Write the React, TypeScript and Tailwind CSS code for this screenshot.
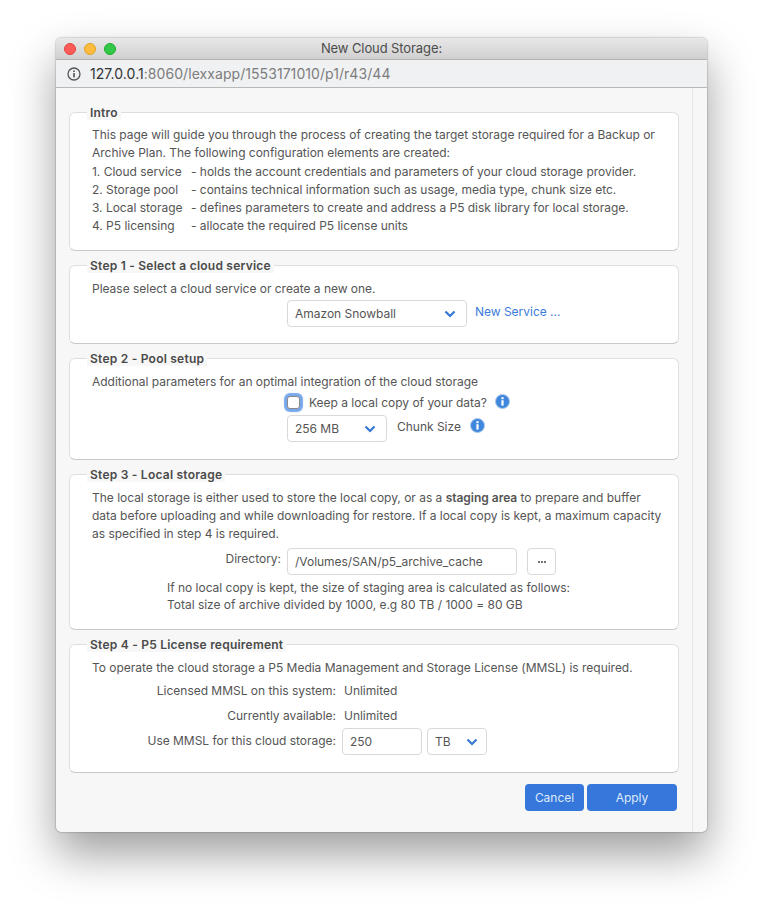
import React from 'react';

const FONT = "font-['Inter','Noto_Sans',sans-serif]";

const Chevron = () => (
  <svg width="12" height="8" viewBox="0 0 12 8" fill="none">
    <path d="M1.5 1.5 6 6l4.5-4.5" stroke="#3478d8" strokeWidth="2.2" />
  </svg>
);

const InfoIcon = () => (
  <svg width="15" height="15" viewBox="0 0 15 15" className="shrink-0">
    <circle cx="7.5" cy="7.5" r="7" fill="#3f87dc" stroke="#a9c8ea" strokeWidth="1" />
    <rect x="6.4" y="6.2" width="2.2" height="5.4" fill="#fff" />
    <rect x="6.4" y="3.2" width="2.2" height="2" fill="#fff" />
  </svg>
);

const Select = ({ label, className }: { label: string; className: string }) => (
  <div
    className={`h-[27px] flex items-center justify-between pl-[7px] bg-white border border-[#d9d9d9] rounded-[4px] ${className}`}
  >
    <span>{label}</span>
    <Chevron />
  </div>
);

const Card = ({
  title,
  height,
  children,
}: {
  title: string;
  height: string;
  children: React.ReactNode;
}) => (
  <fieldset
    className={`${height} bg-white border border-[#dedede] border-b-[#c9c9c9] rounded-[6px] pl-[22px] pr-3 min-w-0`}
  >
    <legend className="-ml-[5px] px-[3px] bg-[#f7f7f7] font-semibold text-[#4a4a4a] text-[12px] leading-[15px] tracking-[0.23px]">
      {title}
    </legend>
    {children}
  </fieldset>
);

const App = () => {
  return (
    <div
      className={`w-[763px] h-[906px] bg-white pt-[38px] pl-[56px] overflow-hidden ${FONT} text-[12px] text-[#555] tracking-[-0.02px]`}
    >
      <div className="w-[651px] h-[794px] flex flex-col rounded-[5px] overflow-hidden bg-[#f7f7f7] shadow-[0_22px_45px_rgba(0,0,0,0.38),0_0_2px_rgba(0,0,0,0.45)]">
        <header className="h-[22px] shrink-0 relative flex items-center justify-center bg-gradient-to-b from-[#e8e8e8] to-[#d0d0d0] border-b border-[#b2b2b2]">
          <div className="absolute left-[8px] top-[5px] flex gap-2">
            <span className="w-3 h-3 rounded-full bg-[#fc5b57] border border-[#e0443e]" />
            <span className="w-3 h-3 rounded-full bg-[#fdbc40] border border-[#dea123]" />
            <span className="w-3 h-3 rounded-full bg-[#33c748] border border-[#1dad2b]" />
          </div>
          <span className="text-[13px] text-[#4d4d4d] tracking-[-0.1px]">New Cloud Storage:</span>
        </header>

        <div className="h-[28px] shrink-0 flex items-center gap-[9px] pl-[11px] bg-[#f0f1f3] border-b border-[#b8b8b8] text-[14px] tracking-[0.06px]">
          <svg width="14" height="14" viewBox="0 0 14 14" fill="none">
            <circle cx="7" cy="7" r="6" stroke="#555" strokeWidth="1.3" />
            <rect x="6.2" y="6" width="1.6" height="4.4" fill="#555" />
            <rect x="6.2" y="3.4" width="1.6" height="1.6" fill="#555" />
          </svg>
          <span>
            <span className="text-[#333]">127.0.0.1</span>
            <span className="text-[#7d7d7d]">:8060/lexxapp/1553171010/p1/r43/44</span>
          </span>
        </div>

        <div className="flex flex-1 min-h-0">
          <main className="w-[636px] pt-[17px] pl-[13px] flex flex-col gap-[7px]">
            <div className="w-[610px] flex flex-col gap-[7px]">
              <Card title="Intro" height="h-[146px]">
                <div className="pt-[6px] leading-[18px]">
                  <p>This page will guide you through the process of creating the target storage required for a Backup or</p>
                  <p className="mb-px">Archive Plan. The following configuration elements are created:</p>
                  {[
                    ['1. Cloud service', '- holds the account credentials and parameters of your cloud storage provider.'],
                    ['2. Storage pool', '- contains technical information such as usage, media type, chunk size etc.'],
                    ['3. Local storage', '- defines parameters to create and address a P5 disk library for local storage.'],
                    ['4. P5 licensing', '- allocate the required P5 license units'],
                  ].map(([name, text]) => (
                    <div key={name} className="flex">
                      <span className="w-[99px] shrink-0">{name}</span>
                      <span>{text}</span>
                    </div>
                  ))}
                </div>
              </Card>

              <Card title="Step 1 - Select a cloud service" height="h-[86px]">
                <p className="pt-[7px] leading-[18px]">Please select a cloud service or create a new one.</p>
                <div className="flex items-start mt-[2px] ml-[195px] gap-2">
                  <Select label="Amazon Snowball" className="w-[180px] pr-[10px]" />
                  <a className="text-[#3b7bd9] leading-[23px]">New Service ...</a>
                </div>
              </Card>

              <Card title="Step 2 - Pool setup" height="h-[109px]">
                <p className="pt-[7px] leading-[18px]">Additional parameters for an optimal integration of the cloud storage</p>
                <div className="flex items-center h-[19px] mt-[2px] ml-[195px]">
                  <span className="w-[13px] h-[13px] bg-white border border-[#8a8a8a] rounded-[3px] shadow-[0_0_1px_3px_#77a8ec]" />
                  <span className="ml-[9px]">Keep a local copy of your data?</span>
                  <span className="ml-[8px] -mt-[2px]">
                    <InfoIcon />
                  </span>
                </div>
                <div className="flex items-start mt-[3px] ml-[195px]">
                  <Select label="256 MB" className="w-[100px] pr-[10px]" />
                  <span className="ml-[10px] leading-[23px]">Chunk Size</span>
                  <span className="ml-[9px] mt-[3px]">
                    <InfoIcon />
                  </span>
                </div>
              </Card>

              <Card title="Step 3 - Local storage" height="h-[163px]">
                <div className="pt-[7px] leading-[18px]">
                  <p>
                    The local storage is either used to store the local copy, or as a <b className="font-semibold">staging area</b> to prepare and buffer
                  </p>
                  <p>data before uploading and while downloading for restore. If a local copy is kept, a maximum capacity</p>
                  <p>as specified in step 4 is required.</p>
                </div>
                <div className="flex items-start mt-[5px]">
                  <span className="w-[189px] text-right leading-[22px]">Directory:</span>
                  <div className="ml-[6px] w-[230px] h-[27px] flex items-center pl-[7px] bg-white border border-[#d9d9d9] rounded-[4px]">
                    /Volumes/SAN/p5_archive_cache
                  </div>
                  <div className="ml-[10px] w-[29px] h-[27px] flex items-center justify-center gap-[1px] border border-[#d9d9d9] rounded-[4px]">
                    <span className="w-[2px] h-[2px] bg-[#444] rounded-full" />
                    <span className="w-[2px] h-[2px] bg-[#444] rounded-full" />
                    <span className="w-[2px] h-[2px] bg-[#444] rounded-full" />
                  </div>
                </div>
                <div className="pl-[75px] pt-[4px] leading-[17px]">
                  <p>If no local copy is kept, the size of staging area is calculated as follows:</p>
                  <p>Total size of archive divided by 1000, e.g 80 TB / 1000 = 80 GB</p>
                </div>
              </Card>

              <Card title="Step 4 - P5 License requirement" height="h-[136px]">
                <p className="pt-[7px] leading-[18px]">To operate the cloud storage a P5 Media Management and Storage License (MMSL) is required.</p>
                <div className="flex mt-[5px] h-[18px] leading-[18px]">
                  <span className="w-[244px] text-right">Licensed MMSL on this system:</span>
                  <span className="ml-2">Unlimited</span>
                </div>
                <div className="flex mt-[7px] h-[18px] leading-[18px]">
                  <span className="w-[244px] text-right">Currently available:</span>
                  <span className="ml-2">Unlimited</span>
                </div>
                <div className="flex items-start mt-[3px]">
                  <span className="w-[244px] text-right leading-[26px]">Use MMSL for this cloud storage:</span>
                  <div className="ml-[6px] w-[80px] h-[27px] flex items-center pl-[7px] bg-white border border-[#d9d9d9] rounded-[4px]">
                    250
                  </div>
                  <Select label="TB" className="ml-[5px] w-[60px] pr-2" />
                </div>
              </Card>
            </div>

            <div className="w-[608px] flex justify-end gap-[3px] mt-[4px]">
              <button className="w-[59px] h-[27px] rounded-[4px] bg-[#3577da] text-[#dfeafa]">Cancel</button>
              <button className="w-[90px] h-[27px] rounded-[4px] bg-[#3577da] text-[#dfeafa]">Apply</button>
            </div>
          </main>
          <aside className="w-[15px] border-l border-[#e6e6e6]" />
        </div>
      </div>
    </div>
  );
};

export default App;
